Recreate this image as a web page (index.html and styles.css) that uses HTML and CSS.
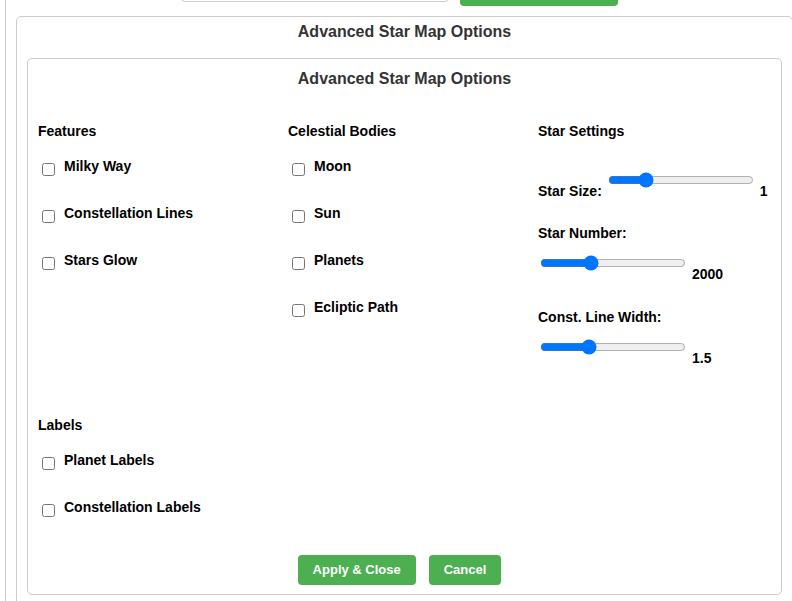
FILE: index.html
```html
<!DOCTYPE html>
<html lang="en">
<head>
<meta charset="utf-8">
<title>Advanced Star Map Options</title>
<link rel="stylesheet" href="styles.css">
</head>
<body>
<div class="page">
  <div class="topbar">
    <input class="search" type="text" aria-label="Search">
    <button class="topbtn" type="button"></button>
  </div>
  <section class="outer">
    <h3 class="title outer-title">Advanced Star Map Options</h3>
    <div class="modal">
      <h3 class="title modal-title">Advanced Star Map Options</h3>
      <div class="grid">
        <div class="group">
          <h4>Features</h4>
          <label class="opt"><input type="checkbox"><span>Milky Way</span></label>
          <label class="opt"><input type="checkbox"><span>Constellation Lines</span></label>
          <label class="opt"><input type="checkbox"><span>Stars Glow</span></label>
        </div>
        <div class="group">
          <h4>Celestial Bodies</h4>
          <label class="opt"><input type="checkbox"><span>Moon</span></label>
          <label class="opt"><input type="checkbox"><span>Sun</span></label>
          <label class="opt"><input type="checkbox"><span>Planets</span></label>
          <label class="opt"><input type="checkbox"><span>Ecliptic Path</span></label>
        </div>
        <div class="group settings">
          <h4>Star Settings</h4>
          <div class="setting">
            <div class="srow"><label>Star Size:</label><input type="range" min="0.1" max="4" step="0.1" value="1"><span class="val">1</span></div>
          </div>
          <div class="setting">
            <label class="name">Star Number:</label>
            <div class="srow"><input type="range" min="500" max="5000" step="100" value="2000"><span class="val">2000</span></div>
          </div>
          <div class="setting">
            <label class="name">Const. Line Width:</label>
            <div class="srow"><input type="range" min="0.1" max="4.5" step="0.1" value="1.5"><span class="val">1.5</span></div>
          </div>
        </div>
        <div class="group">
          <h4>Labels</h4>
          <label class="opt"><input type="checkbox"><span>Planet Labels</span></label>
          <label class="opt"><input type="checkbox"><span>Constellation Labels</span></label>
        </div>
      </div>
      <div class="actions">
        <button type="button">Apply &amp; Close</button>
        <button type="button">Cancel</button>
      </div>
    </div>
  </section>
</div>
</body>
</html>
```

FILE: styles.css
```css
html, body {
  margin: 0;
  padding: 0;
  overflow: hidden;
  background: #fff;
  font-family: "Liberation Sans", Arial, sans-serif;
}

.page {
  margin-left: 5px;
  border-left: 1px solid #ccc;
  width: 789px;
  min-height: 700px;
  padding-left: 10px;
  box-sizing: border-box;
}

.topbar {
  display: flex;
  align-items: flex-start;
  gap: 11px;
  margin-top: -30px;
  margin-bottom: 10px;
  padding-left: 165px;
  height: 36px;
}

.search {
  width: 268px;
  height: 32px;
  margin: 0;
  padding: 0;
  border: 1px solid #ccc;
  border-radius: 4px;
  box-sizing: border-box;
  background: #fff;
}

.topbtn {
  width: 158px;
  height: 36px;
  margin: 0;
  border: 0;
  border-radius: 4px;
  background: #4caf50;
}

.outer {
  width: 777px;
  box-sizing: border-box;
  border: 1px solid #ccc;
  border-radius: 5px;
  padding: 6px 10px 40px;
}

.title {
  margin: 0;
  font-size: 16px;
  line-height: 18px;
  font-weight: bold;
  color: #333;
  text-align: center;
}

.outer-title {
  margin-bottom: 17px;
}

.modal {
  border: 1px solid #ccc;
  border-radius: 5px;
  padding: 11px 10px 9px;
}

.modal-title {
  margin-bottom: 35px;
}

.grid {
  display: grid;
  grid-template-columns: 240px 240px 240px;
  column-gap: 10px;
  row-gap: 51px;
}

.group h4 {
  margin: 0 0 19px;
  font-size: 14px;
  line-height: 16px;
  font-weight: bold;
  color: #000;
}

.settings h4 {
  margin-bottom: 33px;
}

.opt {
  display: flex;
  align-items: flex-start;
  margin-bottom: 26px;
  font-size: 14px;
  line-height: 16px;
  font-weight: bold;
  color: #000;
}

.opt:last-child {
  margin-bottom: 0;
}

.opt input {
  width: 13px;
  height: 13px;
  margin: 5px 9px 3px 4px;
}

.setting {
  margin-bottom: 26px;
  font-size: 14px;
  line-height: 16px;
  font-weight: bold;
  color: #000;
}

.setting:nth-child(3) {
  margin-bottom: 27px;
}

.setting:last-child {
  margin-bottom: 0;
}

.setting .name {
  display: block;
  margin-bottom: 14px;
}

.srow {
  display: flex;
  align-items: flex-end;
  white-space: nowrap;
}

.srow label {
  margin-right: 4px;
}

.srow input[type="range"] {
  width: 146px;
  height: 16px;
  margin: 0 2px 11px;
  padding: 0;
}

.srow .val {
  margin-left: 4px;
}

.actions {
  display: flex;
  justify-content: center;
  gap: 3px;
  margin-top: 35px;
}

.actions button {
  margin: 0 10px 0 0;
  padding: 7px 15px;
  border: 0;
  border-radius: 4px;
  background: #4caf50;
  color: #fff;
  font-family: "Liberation Sans", Arial, sans-serif;
  font-size: 13px;
  line-height: 16px;
  font-weight: bold;
}
```
